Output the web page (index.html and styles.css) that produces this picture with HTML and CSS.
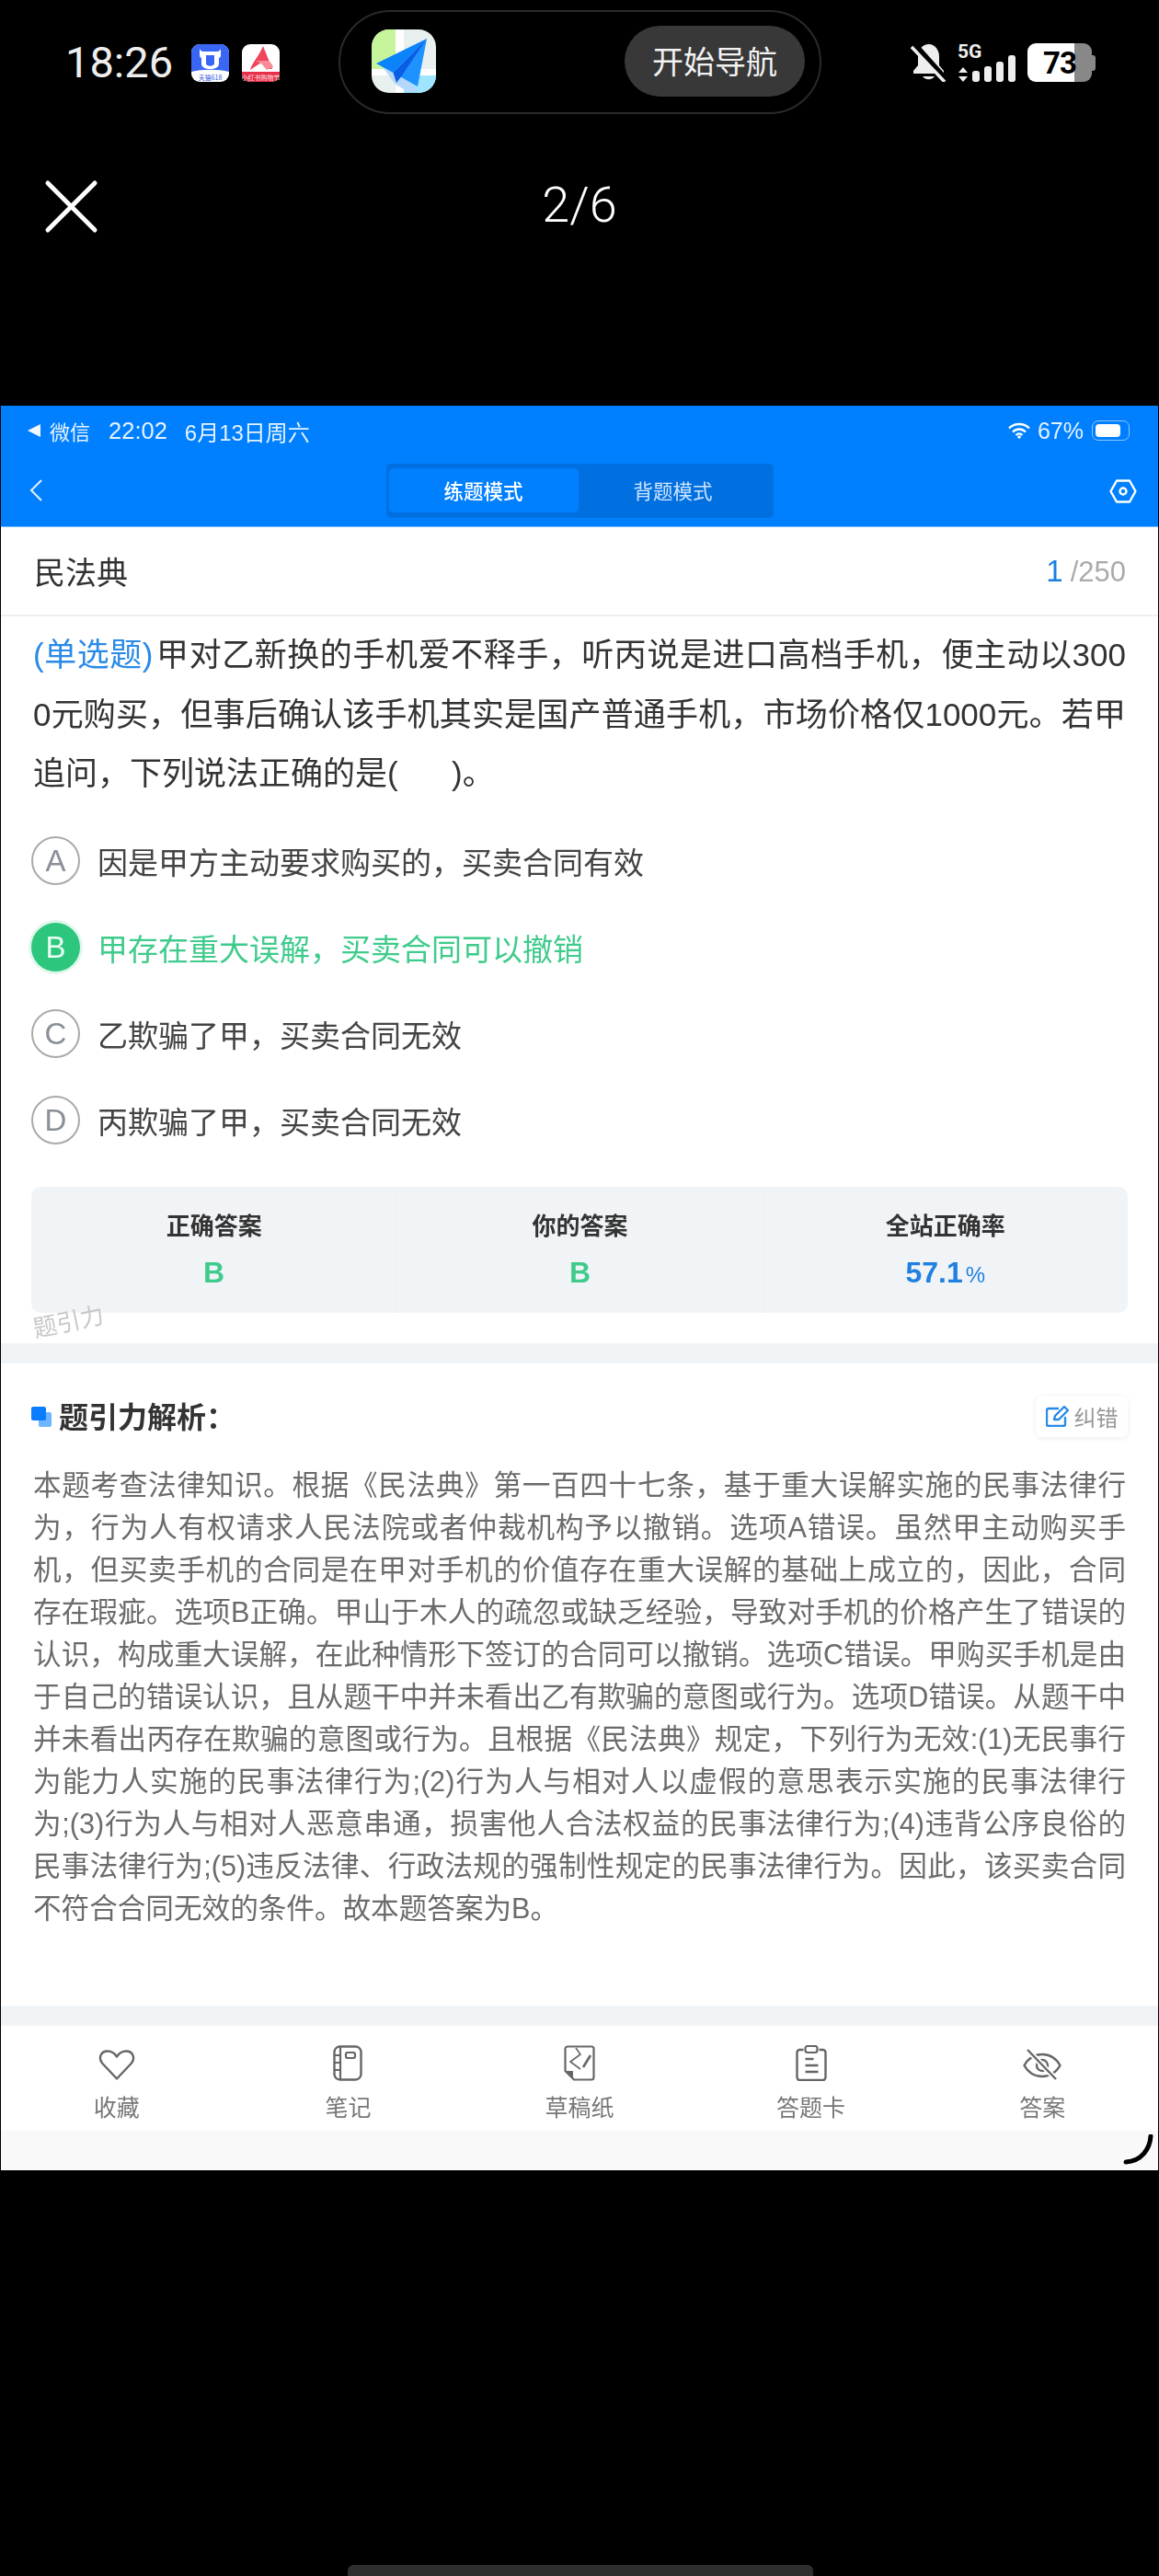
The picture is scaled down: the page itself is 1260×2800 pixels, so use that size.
FILE: index.html
```html
<!DOCTYPE html>
<html lang="zh-CN">
<head>
    <meta charset="UTF-8">
    <meta name="viewport" content="width=device-width, initial-scale=1.0">
    <title>题引力</title>
    <link rel="stylesheet" href="styles.css">
</head>
<body>
    <div class="phone-bar">
        <div class="clock">18:26</div>
        <svg class="app-icon" viewBox="0 0 41 41">
            <rect width="41" height="41" rx="9" fill="#fff"/>
            <path d="M0 9a9 9 0 0 1 9-9h23a9 9 0 0 1 9 9v21c-12-3-29-3-41 0z" fill="#3a66f6"/>
            <path d="M9 5c1 2 2 3 4 3h15c2 0 3-1 4-3v7c0 2-1 3-2 3v6c0 4-4 6-9.500 6S11 25 11 21v-6c-1 0-2-1-2-3z" fill="#fff"/>
            <path d="M16 12v9c0 3.500 9 3.500 9 0v-9z" fill="#3a66f6"/>
            <text x="20.500" y="39" class="app-text" fill="#2f55e0">天猫618</text>
        </svg>
        <svg class="app-icon app-red" viewBox="0 0 41 41">
            <rect width="41" height="41" rx="9" fill="#fff"/>
            <path d="M0 30h41v2a9 9 0 0 1-9 9H9a9 9 0 0 1-9-9z" fill="#e8304a"/>
            <path d="M23 2l10 25h-6l-6-7-12 8c2-8 9-14 14-26z" fill="#f0455c"/>
            <path d="M15 18h13c3 1 5 4 6 7l-7 3-6-7z" fill="#f98a97"/>
            <text x="20.500" y="39" class="app-text" fill="#ffe1e5">小红书购物节</text>
        </svg>
        <div class="island">
            <svg class="map-icon" viewBox="0 0 70 69">
                <defs><clipPath id="sq"><rect width="70" height="69" rx="19"/></clipPath></defs>
                <g clip-path="url(#sq)">
                    <rect width="70" height="69" fill="#e8f1ef"/>
                    <rect width="26" height="43" fill="#c6f59b"/>
                    <rect x="35" y="50" width="35" height="19" fill="#9fe5ff"/>
                    <rect x="26" width="9" height="69" fill="#fff"/>
                    <rect y="43" width="70" height="7" fill="#fff"/>
                    <polygon points="12,41 30,47 50,66 40,68 30,62 26,60" fill="#b5d8fa"/>
                    <polygon points="60,10 5,37 23.500,47" fill="#0b84fb"/>
                    <polygon points="60,10 23.500,47 50,62" fill="#1e92ff"/>
                    <polygon points="60,10 23.500,47 27,58 33,50" fill="#0a5ee6"/>
                </g>
            </svg>
            <div class="nav-btn">开始导航</div>
        </div>
        <div class="sys-icons">
            <svg class="bell" viewBox="0 0 39 42">
                <path d="M20 1c-7 0-12 6-12 13v10l-5 6v3h33v-3l-5-6V14c0-7-5-13-11-13z" fill="#eee"/>
                <path d="M13 36a7 5 0 0 0 13 0z" fill="#eee"/>
                <line x1="4" y1="1" x2="39" y2="40" stroke="#000" stroke-width="6"/>
                <line x1="1" y1="4" x2="37" y2="42" stroke="#eee" stroke-width="3.500"/>
            </svg>
            <div class="net">
                <div class="net-label">5G</div>
                <svg class="net-arrows" viewBox="0 0 12 16">
                    <path d="M6 0l5 6H1zM6 16l5-6H1z" fill="#eee"/>
                </svg>
            </div>
            <div class="signal">
                <span class="s1"></span><span class="s2"></span><span class="s3"></span><span class="s4"></span>
            </div>
            <div class="batt">73</div>
        </div>
    </div>

    <div class="viewer-head">
        <svg class="close" viewBox="0 0 60 60">
            <path d="M4 4l52 52M56 4L4 56" stroke="#fff" stroke-width="5" stroke-linecap="round"/>
        </svg>
        <div class="counter">2/6</div>
    </div>

    <div class="shot">
        <div class="ios-bar">
            <div class="ios-left">
                <span class="ios-back"></span>
                <span>微信</span>
                <span class="ios-time">22:02</span>
                <span class="ios-date">6月13日周六</span>
            </div>
            <div class="ios-right">
                <svg class="wifi" viewBox="0 0 24 18">
                    <path d="M1 6.500c6-6 16-6 22 0M5 10.500c4-4 10-4 14 0M8.500 14c2-2 5-2 7 0" fill="none" stroke="#fff" stroke-width="2.400"/>
                    <circle cx="12" cy="16" r="1.800" fill="#fff"/>
                </svg>
                <span>67%</span>
                <div class="ios-batt"><span></span></div>
            </div>
        </div>

        <div class="nav">
            <svg class="back" viewBox="0 0 15 24">
                <path d="M13 1L2 12l11 11" fill="none" stroke="#e6f2ff" stroke-width="2"/>
            </svg>
            <div class="tabs">
                <div class="tab active">练题模式</div>
                <div class="tab">背题模式</div>
            </div>
            <svg class="gear" viewBox="0 0 30 26">
                <polygon points="1.500,13 8,1.500 22,1.500 28.500,13 22,24.500 8,24.500" fill="none" stroke="#fff" stroke-width="2.400" stroke-linejoin="round"/>
                <circle cx="15" cy="13" r="3.500" fill="none" stroke="#fff" stroke-width="2.400"/>
            </svg>
        </div>

        <div class="subject">
            <div class="subject-name">民法典</div>
            <div class="progress"><span class="current">1</span><span class="total">/250</span></div>
        </div>

        <div class="question">
            <div class="line"><span class="qtype">(单选题)</span>甲对乙新换的手机爱不释手，听丙说是进口高档手机，便主动以300</div>
            <div class="line">0元购买，但事后确认该手机其实是国产普通手机，市场价格仅1000元。若甲</div>
            <div class="line">追问，下列说法正确的是(&nbsp;&nbsp;&nbsp;&nbsp;&nbsp;&nbsp;)。</div>
        </div>

        <div class="options">
            <div class="option"><span class="letter">A</span>因是甲方主动要求购买的，买卖合同有效</div>
            <div class="option right"><span class="letter">B</span>甲存在重大误解，买卖合同可以撤销</div>
            <div class="option"><span class="letter">C</span>乙欺骗了甲，买卖合同无效</div>
            <div class="option"><span class="letter">D</span>丙欺骗了甲，买卖合同无效</div>
        </div>

        <div class="stats">
            <div class="stat">
                <div class="stat-label">正确答案</div>
                <div class="stat-value green">B</div>
            </div>
            <div class="stat">
                <div class="stat-label">你的答案</div>
                <div class="stat-value green">B</div>
            </div>
            <div class="stat">
                <div class="stat-label">全站正确率</div>
                <div class="stat-value blue">57.1<small>%</small></div>
            </div>
        </div>
        <div class="watermark">题引力</div>

        <div class="band band-top"></div>

        <div class="analysis">
            <div class="analysis-head">
                <svg class="analysis-icon" viewBox="0 0 22 22">
                    <rect x="8" y="6" width="14" height="16" rx="2" fill="#6cb6ff"/>
                    <rect width="16" height="15" rx="2" fill="#0a7cff"/>
                </svg>
                <div class="analysis-title">题引力解析：</div>
                <div class="report">
                    <svg class="report-icon" viewBox="0 0 25 23">
                        <path d="M14 3H3a2 2 0 0 0-2 2v15a2 2 0 0 0 2 2h16a2 2 0 0 0 2-2v-8" fill="none" stroke="#2a8ae8" stroke-width="2.400"/>
                        <path d="M9 15l1-4L20 1l4 4-10 10z" fill="none" stroke="#2a8ae8" stroke-width="2.400" stroke-linejoin="round"/>
                    </svg>
                    <span>纠错</span>
                </div>
            </div>
            <div class="analysis-text">
                <div class="line">本题考查法律知识。根据《民法典》第一百四十七条，基于重大误解实施的民事法律行</div>
                <div class="line">为，行为人有权请求人民法院或者仲裁机构予以撤销。选项A错误。虽然甲主动购买手</div>
                <div class="line">机，但买卖手机的合同是在甲对手机的价值存在重大误解的基础上成立的，因此，合同</div>
                <div class="line">存在瑕疵。选项B正确。甲山于木人的疏忽或缺乏经验，导致对手机的价格产生了错误的</div>
                <div class="line">认识，构成重大误解，在此种情形下签订的合同可以撤销。选项C错误。甲购买手机是由</div>
                <div class="line">于自己的错误认识，且从题干中并未看出乙有欺骗的意图或行为。选项D错误。从题干中</div>
                <div class="line">并未看出丙存在欺骗的意图或行为。且根据《民法典》规定，下列行为无效:(1)无民事行</div>
                <div class="line">为能力人实施的民事法律行为;(2)行为人与相对人以虚假的意思表示实施的民事法律行</div>
                <div class="line">为;(3)行为人与相对人恶意串通，损害他人合法权益的民事法律行为;(4)违背公序良俗的</div>
                <div class="line">民事法律行为;(5)违反法律、行政法规的强制性规定的民事法律行为。因此，该买卖合同</div>
                <div class="line">不符合合同无效的条件。故本题答案为B。</div>
            </div>
        </div>

        <div class="band"></div>

        <div class="tabbar">
            <div class="tabbar-item">
                <svg class="ico-heart" viewBox="0 0 40 34">
                    <path d="M20 32L4 15C0 10 2 2 10 2c5 0 8 3 10 6 2-3 5-6 10-6 8 0 10 8 6 13z" fill="none" stroke="#666" stroke-width="2.400" stroke-linejoin="round"/>
                </svg>
                <span>收藏</span>
            </div>
            <div class="tabbar-item">
                <svg class="ico-tall" viewBox="0 0 32 39">
                    <rect x="1.500" y="1.500" width="29" height="36" rx="6" fill="none" stroke="#666" stroke-width="2.400"/>
                    <path d="M8 2v35M2 11h6M2 19h6M2 27h6" fill="none" stroke="#666" stroke-width="2.200"/>
                    <rect x="14" y="8" width="10" height="6" rx="2" fill="none" stroke="#666" stroke-width="2.200"/>
                </svg>
                <span>笔记</span>
            </div>
            <div class="tabbar-item">
                <svg class="ico-tall" viewBox="0 0 34 39">
                    <path d="M4 1.500h26a2.500 2.500 0 0 1 2.500 2.500v31a2.500 2.500 0 0 1-2.500 2.500H11L1.500 28V4A2.500 2.500 0 0 1 4 1.500z" fill="none" stroke="#666" stroke-width="2.200" stroke-linejoin="round"/>
                    <path d="M2 28h8v9z" fill="#666"/>
                    <path d="M13 3l5 7-11 8 11 8" fill="none" stroke="#666" stroke-width="1.600"/>
                    <path d="M29 11l-8 13" fill="none" stroke="#666" stroke-width="2.600"/>
                </svg>
                <span>草稿纸</span>
            </div>
            <div class="tabbar-item">
                <svg class="ico-tall" viewBox="0 0 33 39">
                    <path d="M8 5H4a3 3 0 0 0-3 3v27a3 3 0 0 0 3 3h25a3 3 0 0 0 3-3V8a3 3 0 0 0-3-3h-4" fill="none" stroke="#666" stroke-width="2.400"/>
                    <rect x="10" y="1" width="13" height="7" rx="2.500" fill="none" stroke="#666" stroke-width="2.200"/>
                    <path d="M10 15h9M10 22h14M10 29h14" fill="none" stroke="#666" stroke-width="2.400"/>
                </svg>
                <span>答题卡</span>
            </div>
            <div class="tabbar-item">
                <svg class="ico-eye" viewBox="0 0 42 34">
                    <path d="M1.500 18C6 10 13 6 21 6s15 4 19.500 12C36 26 29 30 21 30S6 26 1.500 18z" fill="none" stroke="#666" stroke-width="2.400"/>
                    <circle cx="21" cy="18" r="6" fill="none" stroke="#666" stroke-width="2.400"/>
                    <line x1="5" y1="1" x2="36" y2="33" stroke="#fff" stroke-width="6"/>
                    <line x1="5" y1="1" x2="36" y2="33" stroke="#666" stroke-width="2.400"/>
                </svg>
                <span>答案</span>
            </div>
        </div>
        <div class="tabbar-foot"></div>
        <svg class="corner" viewBox="0 0 33 33">
            <path d="M30 2c-1 14-10 27-27 28" fill="none" stroke="#000" stroke-width="5" stroke-linecap="round"/>
        </svg>
    </div>

    <div class="home-bar"></div>
</body>
</html>
```

FILE: styles.css
```css
* {
    box-sizing: border-box;
}
html, body {
    margin: 0;
    padding: 0;
}
body {
    width: 1260px;
    height: 2800px;
    overflow: hidden;
    background-color: #000;
    font-family: "Liberation Sans", "Noto Sans CJK SC", sans-serif;
    position: relative;
}

/* phone status bar */
.phone-bar {
    height: 135px;
    display: flex;
    align-items: flex-start;
    padding-left: 71px;
    font-family: Roboto, "Noto Sans CJK SC", sans-serif;
}
.clock {
    width: 137px;
    margin-top: 40px;
    font-size: 47px;
    line-height: 56px;
    color: #eee;
}
.app-icon {
    width: 41px;
    height: 41px;
    margin-top: 48px;
}
.app-red {
    margin-left: 14px;
}
.app-text {
    font-family: "Noto Sans CJK SC", sans-serif;
    font-size: 7px;
    text-anchor: middle;
}
.island {
    width: 525px;
    height: 113px;
    margin-top: 11px;
    margin-left: 64px;
    padding: 0 16px 0 34px;
    border: 2px solid #2a2a2a;
    border-radius: 57px;
    display: flex;
    align-items: center;
    justify-content: space-between;
}
.map-icon {
    width: 70px;
    height: 69px;
    margin-top: -2px;
}
.nav-btn {
    width: 196px;
    height: 77px;
    margin-top: -2px;
    border-radius: 39px;
    background-color: #383838;
    color: #f2f2f2;
    font-family: "Noto Sans CJK SC", sans-serif;
    font-size: 34px;
    line-height: 75px;
    text-align: center;
}
.sys-icons {
    display: flex;
    align-items: flex-end;
    height: 42px;
    margin-top: 47px;
    margin-left: 97px;
}
.bell {
    width: 39px;
    height: 42px;
}
.net {
    width: 20px;
    margin-left: 12px;
    position: relative;
    height: 42px;
}
.net-label {
    font-size: 21px;
    font-weight: 700;
    line-height: 18px;
    color: #eee;
    white-space: nowrap;
}
.net-arrows {
    position: absolute;
    left: 0;
    bottom: 0;
    width: 12px;
    height: 16px;
}
.signal {
    display: flex;
    align-items: flex-end;
    gap: 5px;
    margin-left: -4px;
}
.signal span {
    width: 8px;
    border-radius: 3px;
    background-color: #eee;
}
.s1 { height: 12px; }
.s2 { height: 17px; }
.s3 { height: 22px; }
.s4 { height: 29px; }
.batt {
    width: 70px;
    height: 42px;
    margin-left: 13px;
    border-radius: 9px;
    background: linear-gradient(90deg, #fff 51px, #888 51px);
    color: #000;
    font-size: 33px;
    font-weight: 700;
    letter-spacing: -1px;
    line-height: 43px;
    text-align: center;
    position: relative;
}
.batt::after {
    content: "";
    position: absolute;
    right: -4px;
    top: 13px;
    width: 4px;
    height: 17px;
    border-radius: 0 3px 3px 0;
    background-color: #888;
}

/* viewer header */
.viewer-head {
    height: 306px;
    padding-top: 60px;
    padding-left: 48px;
    position: relative;
}
.close {
    display: block;
    width: 59px;
    height: 59px;
}
.counter {
    position: absolute;
    left: 0;
    right: 0;
    top: 57px;
    text-align: center;
    font-family: Roboto, sans-serif;
    font-size: 54px;
    font-weight: 300;
    line-height: 62px;
    color: #fff;
}

/* the photographed app screen */
.shot {
    margin: 0 1px;
    height: 1918px;
    background-color: #fff;
    display: flex;
    flex-direction: column;
    position: relative;
    filter: blur(0.6px);
}
.ios-bar {
    height: 54px;
    background-color: #0080ff;
    padding: 0 31px 0 29px;
    display: flex;
    justify-content: space-between;
    align-items: center;
    color: #e6f2ff;
    font-size: 22px;
}
.ios-left, .ios-right {
    display: flex;
    align-items: center;
}
.ios-back {
    width: 0;
    height: 0;
    margin-right: 10px;
    border-top: 7px solid transparent;
    border-bottom: 7px solid transparent;
    border-right: 14px solid #f2f8ff;
}
.ios-time {
    margin-left: 20px;
    font-size: 25.5px;
}
.ios-date {
    margin-left: 19px;
    font-size: 24px;
}
.ios-right {
    font-size: 25px;
}
.wifi {
    width: 24px;
    height: 18px;
    margin-right: 8px;
}
.ios-batt {
    width: 41px;
    height: 22px;
    margin-left: 9px;
    padding: 3px;
    border: 1.5px solid #8cc4ff;
    border-radius: 7px;
}
.ios-batt span {
    display: block;
    width: 27px;
    height: 100%;
    border-radius: 4px;
    background-color: #fff;
}
.nav {
    height: 78px;
    background-color: #0080ff;
    border-bottom: 1px solid #6fb6ff;
    padding: 9px 23px 0;
    display: grid;
    grid-template-columns: 1fr auto 1fr;
    align-items: start;
}
.back {
    width: 15px;
    height: 24px;
    margin-top: 17px;
    margin-left: 8px;
}
.tabs {
    width: 421px;
    height: 59px;
    padding: 5px 3px;
    border-radius: 5px;
    background-color: #0070e0;
    display: flex;
}
.tab {
    width: 206px;
    height: 48px;
    border-radius: 5px;
    color: #cfe4ff;
    font-family: "Noto Sans CJK SC", sans-serif;
    font-size: 21.5px;
    line-height: 48px;
    text-align: center;
}
.tab.active {
    background-color: #0080ff;
    color: #fff;
    font-weight: 500;
}
.gear {
    justify-self: end;
    width: 30px;
    height: 26px;
    margin-top: 17px;
}
.subject {
    height: 97px;
    padding: 0 35px 0 36px;
    border-bottom: 2px solid #f0f0f0;
    display: flex;
    justify-content: space-between;
    align-items: center;
}
.subject-name {
    font-family: "Noto Sans CJK SC", sans-serif;
    font-size: 34px;
    color: #333;
}
.current {
    font-size: 33px;
    color: #1a7fe0;
    margin-right: 8px;
}
.total {
    font-size: 31px;
    color: #aaa;
}
.line {
    text-align: justify;
    text-align-last: justify;
}
.line:last-child {
    text-align-last: left;
}
.question {
    margin-top: 10px;
    padding: 0 35px;
    font-size: 35px;
    line-height: 64.5px;
    color: #333;
}
.qtype {
    color: #2a8ae8;
    margin-right: 3px;
}
.options {
    margin-top: 15px;
}
.option {
    height: 94px;
    padding-left: 33px;
    display: flex;
    align-items: center;
    font-size: 33px;
    color: #444;
}
.letter {
    width: 53px;
    height: 53px;
    margin-right: 19px;
    border: 2px solid #aaa;
    border-radius: 50%;
    text-align: center;
    font-size: 33px;
    line-height: 49px;
    color: #8a8f99;
}
.option.right {
    color: #3fcb8c;
}
.right .letter {
    border: none;
    background-color: #2dc67d;
    color: #e8fff4;
    line-height: 53px;
    box-shadow: 0 0 0 3px rgba(45, 198, 125, 0.15);
}
.stats {
    height: 137px;
    margin: 25px 33px 0;
    border-radius: 10px;
    background-color: #f1f4f7;
    display: grid;
    grid-template-columns: repeat(3, 1fr);
}
.stat {
    text-align: center;
    padding-top: 23px;
}
.stat + .stat {
    border-left: 1px solid #edf0f3;
}
.stat-label {
    font-family: "Noto Sans CJK SC", sans-serif;
    font-size: 26px;
    font-weight: 700;
    line-height: 36px;
    color: #333;
}
.stat-value {
    margin-top: 16px;
    font-size: 32px;
    font-weight: 700;
    line-height: 36px;
}
.stat-value small {
    font-size: 24px;
    font-weight: 400;
    margin-left: 3px;
}
.green {
    color: #3fcb8c;
}
.blue {
    color: #2080e0;
}
.watermark {
    position: absolute;
    left: 34px;
    top: 977px;
    font-family: "Noto Sans CJK SC", sans-serif;
    font-size: 26px;
    line-height: 34px;
    color: #c8c8c8;
    transform: rotate(-12deg);
}
.band {
    height: 22px;
    background-color: #f1f4f7;
}
.band-top {
    margin-top: 33px;
}
.analysis {
    height: 698px;
    padding: 36px 33px 0 33px;
    border-radius: 12px;
    display: flex;
    flex-direction: column;
}
.analysis-head {
    height: 44px;
    display: flex;
    align-items: center;
}
.analysis-icon {
    width: 22px;
    height: 22px;
    margin-right: 8px;
}
.analysis-title {
    flex: 1;
    padding-bottom: 4px;
    font-family: "Noto Sans CJK SC", sans-serif;
    font-size: 32px;
    font-weight: 700;
    color: #333;
}
.report {
    width: 100px;
    height: 44px;
    border-radius: 6px;
    background-color: #fff;
    box-shadow: 0 1px 6px rgba(0, 0, 0, 0.08);
    display: flex;
    align-items: center;
    justify-content: center;
    gap: 6px;
    color: #999;
    font-size: 24px;
}
.report-icon {
    width: 25px;
    height: 23px;
}
.analysis-text {
    margin-top: 29px;
    padding: 0 2px;
    font-size: 30.6px;
    line-height: 46px;
    color: #6b6b6b;
}
.tabbar {
    height: 114px;
    display: grid;
    grid-template-columns: repeat(5, 1fr);
}
.tabbar-item {
    padding-top: 21px;
    position: relative;
    display: flex;
    flex-direction: column;
    align-items: center;
    font-size: 25px;
    color: #777;
}
.tabbar-item svg {
    display: block;
    height: 39px;
}
.tabbar-item span {
    position: absolute;
    top: 72px;
    line-height: 34px;
}
.ico-heart {
    width: 40px;
    padding-top: 4px;
}
.ico-tall {
    width: 34px;
}
.ico-eye {
    width: 42px;
    padding-top: 3px;
}
.tabbar-foot {
    flex: 1;
    background-color: #f9f9f9;
}
.corner {
    position: absolute;
    right: 5px;
    bottom: 6px;
    width: 33px;
    height: 33px;
}
.home-bar {
    position: absolute;
    left: 378px;
    bottom: 0;
    width: 506px;
    height: 12px;
    border-radius: 6px 6px 0 0;
    background-color: #2e2e2e;
}
```
